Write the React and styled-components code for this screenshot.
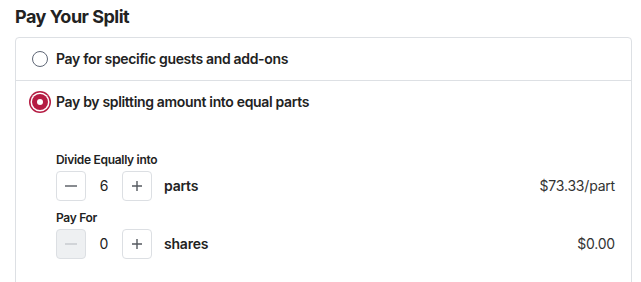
import React from 'react';
import styled, {createGlobalStyle} from "styled-components";

const GlobalStyle = createGlobalStyle`
  body {
    margin: 0;
    background: #fff;
    font-family: Inter, "Noto Sans", sans-serif;
    color: #222;
  }
`

const Page = styled.div`
  padding: 5px 9px 0 15px;
`

const Title = styled.h2`
  margin: 0 0 8px;
  font-size: 18px;
  line-height: 24px;
  font-weight: 700;
  letter-spacing: -0.5px;
  color: #222;
`

const Card = styled.div`
  border: 1px solid #dde0e4;
  border-radius: 4px;
`

const Option = styled.div`
  padding: 11px 16px;
  border-top: ${props => props.$first ? 'none' : '1px solid #dde0e4'};
  padding-bottom: ${props => props.$open ? '40px' : '11px'};
`

const OptionHead = styled.label`
  display: flex;
  align-items: center;
  gap: 8px;
  font-size: 14px;
  line-height: 20px;
  font-weight: 600;
  letter-spacing: -0.33px;
  cursor: pointer;
`

const Radio = styled.span`
  width: 16px;
  height: 16px;
  box-sizing: border-box;
  border-radius: 50%;
  flex-shrink: 0;
  display: flex;
  align-items: center;
  justify-content: center;
  border: ${props => props.$checked ? 'none' : '1.5px solid #5f6776'};
  background: ${props => props.$checked ? '#b51c43' : '#fff'};
  box-shadow: ${props => props.$checked ? '0 0 0 1.5px #fff, 0 0 0 3px #b51c43' : 'none'};

  &::after {
    content: '';
    display: ${props => props.$checked ? 'block' : 'none'};
    width: 6px;
    height: 6px;
    border-radius: 50%;
    background: #fff;
  }
`

const Split = styled.div`
  margin: 40px 0 0 24px;
`

const FieldLabel = styled.div`
  font-size: 12px;
  line-height: 16px;
  font-weight: 600;
  letter-spacing: -0.3px;
  margin-bottom: 3px;
`

const FieldRow = styled.div`
  display: flex;
  align-items: center;
  margin-bottom: 9px;
`

const StepButton = styled.button`
  width: 30px;
  height: 30px;
  padding: 0;
  box-sizing: border-box;
  border: 1px solid #dcdfe3;
  border-radius: 4px;
  background: ${props => props.disabled ? '#eef0f2' : '#fff'};
  color: ${props => props.disabled ? '#c4c8cd' : '#555a60'};
  display: flex;
  align-items: center;
  justify-content: center;
`

const Count = styled.span`
  width: 36px;
  text-align: center;
  font-size: 14px;
  line-height: 20px;
  color: #222;
`

const Unit = styled.span`
  margin-left: 12px;
  font-size: 14px;
  line-height: 20px;
  font-weight: 600;
  letter-spacing: -0.2px;
`

const Price = styled.span`
  margin-left: auto;
  font-size: 14px;
  line-height: 20px;
  color: #333;
  letter-spacing: -0.2px;
`

const Minus = () => (
    <svg width="14" height="14" viewBox="0 0 14 14">
        <path d="M1 7h12" stroke="currentColor" strokeWidth="1.4"/>
    </svg>
)

const Plus = () => (
    <svg width="14" height="14" viewBox="0 0 14 14">
        <path d="M2 7h10M7 2v10" stroke="currentColor" strokeWidth="1.4"/>
    </svg>
)

const Stepper = ({label, value, unit, price}) => (
    <>
        <FieldLabel>{label}</FieldLabel>
        <FieldRow>
            <StepButton disabled={value === 0}><Minus/></StepButton>
            <Count>{value}</Count>
            <StepButton><Plus/></StepButton>
            <Unit>{unit}</Unit>
            <Price>{price}</Price>
        </FieldRow>
    </>
)

const App = () => {
    return (
        <Page>
            <GlobalStyle/>
            <Title>Pay Your Split</Title>
            <Card>
                <Option $first>
                    <OptionHead><Radio/>Pay for specific guests and add-ons</OptionHead>
                </Option>
                <Option $open>
                    <OptionHead><Radio $checked/>Pay by splitting amount into equal parts</OptionHead>
                    <Split>
                        <Stepper label="Divide Equally into" value={6} unit="parts" price="$73.33/part"/>
                        <Stepper label="Pay For" value={0} unit="shares" price="$0.00"/>
                    </Split>
                </Option>
            </Card>
        </Page>
    );
};

export default App;
